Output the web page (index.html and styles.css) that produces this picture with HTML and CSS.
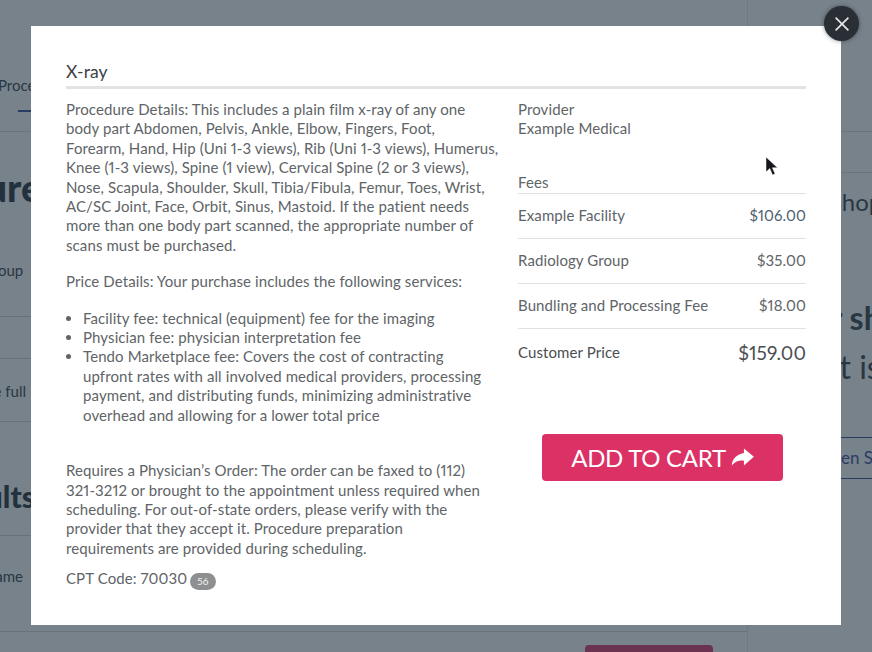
FILE: index.html
```html
<!DOCTYPE html>
<html lang="en">
<head>
    <meta charset="UTF-8">
    <meta name="viewport" content="width=device-width, initial-scale=1.0">
    <title>X-ray - Procedure Details</title>
    <link rel="stylesheet" href="styles.css">
</head>
<body>
    <!-- Page behind the overlay -->
    <div class="page">
        <main class="page-main">
            <div class="tab-row"><span class="tab">Procedure</span></div>
            <h1 class="page-title">Procedure</h1>
            <div class="row row-group">Group</div>
            <div class="row row-empty"></div>
            <div class="row row-full">See the full</div>
            <h2 class="results-title">Results</h2>
            <div class="row row-name">Name</div>
            <div class="row-last"><span class="pink-btn"></span></div>
        </main>
        <aside class="page-side">
            <div class="side-top"></div>
            <div class="side-shop">Shop</div>
            <div class="side-big">Your share</div>
            <div class="side-sub">What is</div>
            <div class="side-link">Open Shop</div>
        </aside>
    </div>

    <div class="overlay"></div>

    <!-- Modal -->
    <section class="modal">
        <h2 class="modal-title">X-ray</h2>
        <div class="modal-body">
            <div class="details">
                <p>Procedure Details: This includes a plain film x-ray of any one<br>
                body part Abdomen, Pelvis, Ankle, Elbow, Fingers, Foot,<br>
                Forearm, Hand, Hip (Uni 1-3 views), Rib (Uni 1-3 views), Humerus,<br>
                Knee (1-3 views), Spine (1 view), Cervical Spine (2 or 3 views),<br>
                Nose, Scapula, Shoulder, Skull, Tibia/Fibula, Femur, Toes, Wrist,<br>
                AC/SC Joint, Face, Orbit, Sinus, Mastoid. If the patient needs<br>
                more than one body part scanned, the appropriate number of<br>
                scans must be purchased.</p>
                <p>Price Details: Your purchase includes the following services:</p>
                <ul>
                    <li>Facility fee: technical (equipment) fee for the imaging</li>
                    <li>Physician fee: physician interpretation fee</li>
                    <li>Tendo Marketplace fee: Covers the cost of contracting<br>
                    upfront rates with all involved medical providers, processing<br>
                    payment, and distributing funds, minimizing administrative<br>
                    overhead and allowing for a lower total price</li>
                </ul>
                <p class="order">Requires a Physician’s Order: The order can be faxed to (112)<br>
                321-3212 or brought to the appointment unless required when<br>
                scheduling. For out-of-state orders, please verify with the<br>
                provider that they accept it. Procedure preparation<br>
                requirements are provided during scheduling.</p>
                <p class="cpt">CPT Code: 70030 <span class="badge">56</span></p>
            </div>
            <div class="summary">
                <div class="provider">Provider<br>Example Medical</div>
                <div class="fees-label">Fees</div>
                <div class="fee"><span>Example Facility</span><span class="fee-hl">$106.00</span></div>
                <div class="fee"><span>Radiology Group</span><span>$35.00</span></div>
                <div class="fee"><span>Bundling and Processing Fee</span><span>$18.00</span></div>
                <div class="fee fee-total"><span>Customer Price</span><span class="total">$159.00</span></div>
                <button class="add-btn" type="button">ADD TO CART
                    <svg class="add-icon" viewBox="0 0 24 20" width="23" height="19"><path d="M13.500 .500L24 9.300l-10.500 9v-5c-5.300-.2-9.400.9-12.800 5.500C1 11.800 5.400 6.800 13.500 5.300z" fill="#fff"/></svg>
                </button>
            </div>
        </div>
    </section>

    <button class="close" type="button" aria-label="Close">
        <svg viewBox="0 0 20 20" width="16" height="16"><path d="M2 2l16 16M18 2L2 18" stroke="#e8e8e8" stroke-width="2" fill="none"/></svg>
    </button>

    <svg class="cursor" viewBox="0 0 14 22" width="14" height="22"><path d="M1 1v15l3.800-3.500L7.500 19l2.600-1.200-2.700-6H12.500z" fill="#16181b" stroke="#fff" stroke-width=".5"/></svg>
</body>
</html>
```

FILE: styles.css
```css
/* General Styles */
* { box-sizing: border-box; }

html, body {
    margin: 0;
    height: 100%;
    overflow: hidden;
}

body {
    font-family: "Lato", "Liberation Sans", sans-serif;
    color: #2e3a46;
    background: #fff;
}

/* Background page */
.page {
    display: flex;
    height: 652px;
    width: 872px;
    overflow: hidden;
}

.page-main {
    width: 748px;
    flex: none;
    border-right: 1px solid #e4e7ea;
}

.page-side {
    flex: 1;
    min-width: 0;
    white-space: nowrap;
}

.tab-row {
    height: 132px;
    padding-top: 75px;
    border-bottom: 1px solid #d5dade;
    font-size: 15px;
    overflow: hidden;
}

.tab {
    display: inline-block;
    margin-left: -2px;
    padding-bottom: 17px;
    line-height: 20px;
    background: linear-gradient(#2f4a9a, #2f4a9a) 20px 100% / 100% 2px no-repeat;
}

.page-title {
    margin: 30px 0 0 -134px;
    height: 97px;
    font-size: 38px;
    line-height: 50px;
    font-weight: 900;
    color: #1d2a36;
}

.row {
    border-bottom: 1px solid #cfd5da;
    font-size: 15px;
}

.row-group {
    margin-left: -18px;
    height: 58px;
    line-height: 22px;
}

.row-empty { height: 42px; }

.row-full {
    margin-left: -48px;
    height: 63px;
    padding-top: 22px;
    line-height: 20px;
}

.results-title {
    margin: 54px 0 0 -62px;
    height: 59px;
    font-size: 30px;
    line-height: 40px;
    font-weight: 900;
    color: #1d2a36;
}

.row-name {
    margin-left: -16px;
    height: 97px;
    padding-top: 29px;
    line-height: 22px;
    border-top: 1px solid #cfd5da;
}

.row-last {
    padding: 13px 0 0 585px;
}

.pink-btn {
    display: block;
    width: 128px;
    height: 50px;
    border-radius: 4px;
    background: #dc3165;
}

.side-top {
    height: 42px;
    margin-top: 131px;
    border-top: 1px solid #d5dade;
    border-bottom: 1px solid #d5dade;
}

.side-shop {
    padding: 16px 0 0 81px;
    font-size: 24px;
    line-height: 26px;
}

.side-big {
    margin-top: 83px;
    padding-left: 29px;
    font-size: 32px;
    line-height: 40px;
    font-weight: 700;
}

.side-sub {
    margin-top: 9px;
    padding-left: 25px;
    font-size: 32px;
    line-height: 40px;
}

.side-link {
    margin-top: 50px;
    height: 42px;
    padding-left: 70px;
    border-top: 1px solid #2f4a9a;
    border-bottom: 1px solid #2f4a9a;
    color: #2f4a9a;
    font-size: 17px;
    line-height: 40px;
}

.overlay {
    position: fixed;
    inset: 0;
    background: rgba(37, 53, 66, 0.62);
}

/* Modal */
.modal {
    position: fixed;
    left: 31px;
    top: 26px;
    width: 810px;
    height: 599px;
    padding: 34px 35px 0;
    background: #fff;
    color: #606467;
    font-size: 15px;
    line-height: 19.4px;
    letter-spacing: .1px;
    font-feature-settings: "pnum";
}

.modal-title {
    margin: 0 0 11px;
    height: 29px;
    border-bottom: 3px solid #e2e4e3;
    font-size: 17.500px;
    line-height: 24px;
    font-weight: 400;
    color: #3c4045;
}

.modal-body { display: flex; }

.details {
    width: 452px;
    flex: none;
    white-space: nowrap;
}

.details p { margin: 0 0 17px; }

.details ul {
    margin: 0;
    padding-left: 17px;
}

.details .order { margin: 36px 0 0; }

.details .cpt { margin: 11px 0 0; }

.badge {
    display: inline-block;
    margin-left: -1px;
    padding: 0 7px;
    height: 17px;
    border-radius: 9px;
    background: #8e8f90;
    color: #f2f2f2;
    font-size: 10px;
    line-height: 17px;
    vertical-align: -1px;
}

.summary { width: 288px; flex: none; }

.provider { margin-bottom: 34px; }

.fees-label {
    height: 21px;
    border-bottom: 1px solid #dfe1e2;
}

.fee {
    display: flex;
    justify-content: space-between;
    align-items: center;
    height: 45px;
    padding-bottom: 1px;
    border-bottom: 1px solid #dfe1e2;
}

.fee-hl { color: #4f5f70; }

.fee-total {
    border-bottom: 0;
    height: 47px;
    padding-bottom: 0;
    color: #4a4e52;
}

.total { font-size: 19px; }

.add-btn {
    display: flex;
    align-items: center;
    justify-content: center;
    gap: 5px;
    width: 241px;
    height: 47px;
    margin: 58px 0 0 24px;
    padding-bottom: 1px;
    border: 0;
    border-radius: 4px;
    background: #dc3165;
    color: #fff;
    font-family: inherit;
    font-size: 24px;
    letter-spacing: -.3px;
}

.close {
    position: fixed;
    left: 824px;
    top: 6px;
    width: 35px;
    height: 35px;
    display: flex;
    align-items: center;
    justify-content: center;
    padding: 0;
    border: 0;
    border-radius: 50%;
    background: #2a2f36;
    box-shadow: 0 0 4px rgba(20, 25, 30, .5);
}

.cursor {
    position: fixed;
    left: 765px;
    top: 156px;
}
```
